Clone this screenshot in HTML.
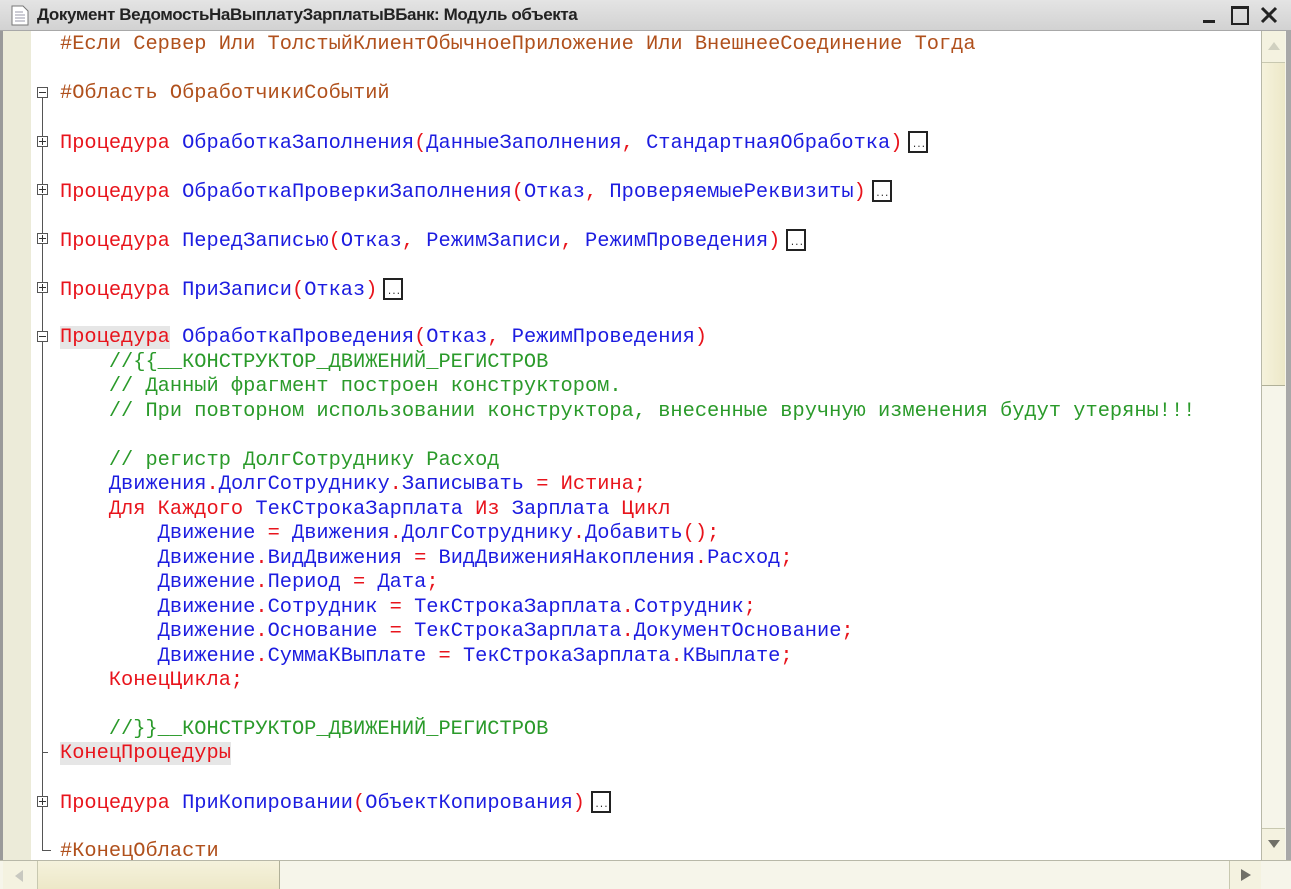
<!DOCTYPE html>
<html><head><meta charset="utf-8"><style>
body{margin:0;width:1291px;height:888px;overflow:hidden;background:#fff;position:relative;font-family:"Liberation Sans",sans-serif}
#title{position:absolute;left:0;top:0;width:1291px;height:30px;background:linear-gradient(#e4e4e4,#d2d2d2);border-bottom:1px solid #a8a8a8}
#title .t{position:absolute;left:37px;top:5px;font-size:17px;font-weight:bold;color:#222;letter-spacing:-0.4px}
#gut{position:absolute;left:0;top:31px;width:31px;height:829px;background:#ecebd9;border-left:3px solid #9a9a9a;box-sizing:border-box}
#code{position:absolute;left:60px;top:33px;font-family:"Liberation Mono",monospace;font-size:20.35px;white-space:pre}
.l{position:absolute;left:0;height:24px;line-height:24px}
.r{color:#e8141c}.b{color:#1c1ce0}.g{color:#2a9a2a}.p{color:#b0501c}
.hl{background:#e6e6e6}
.dots{display:inline-block;width:20px;height:22px;border:2px solid #222;vertical-align:-5px;font-size:9px;line-height:24px;text-align:center;color:#222;box-sizing:border-box;margin-left:6px;overflow:hidden;letter-spacing:-1px}
.box{position:absolute;left:37px;width:11px;height:11px;border:1px solid #555;background:#fff;box-sizing:border-box}
.box:before{content:"";position:absolute;left:1px;top:4px;width:7px;height:1px;background:#333}
.box.pl:after{content:"";position:absolute;left:4px;top:1px;width:1px;height:7px;background:#333}
#vs{position:absolute;left:1261px;top:31px;width:24px;height:829px;background:#f6f5ea;border-left:1px solid #b8b8a8}
#hs{position:absolute;left:0;top:860px;width:1291px;height:28px;background:#f6f5ea;border-top:1px solid #b8b8a8}
</style></head><body>
<div id="title">
<svg style="position:absolute;left:11px;top:5px" width="18" height="21"><path d="M1 1h11l5 5v14H1z" fill="#fff" stroke="#777"/><path d="M4 7h8M4 10h10M4 13h10M4 16h10" stroke="#99a"/></svg>
<div class="t">Документ ВедомостьНаВыплатуЗарплатыВБанк: Модуль объекта</div>
<div style="position:absolute;left:1203px;top:20px;width:12px;height:3px;background:#222"></div>
<div style="position:absolute;left:1231px;top:6px;width:14px;height:14px;border:2px solid #222;border-top-width:3px"></div>
<svg style="position:absolute;left:1260px;top:6px" width="18" height="18"><path d="M2 2L16 16M16 2L2 16" stroke="#222" stroke-width="3"/></svg>
</div>
<div style="position:absolute;left:1285px;top:30px;width:6px;height:858px;background:#a8a8a8"></div>
<div id="gut"></div>
<div style="position:absolute;left:42px;top:98px;width:1px;height:752px;background:#555"></div>
<div style="position:absolute;left:42px;top:850px;width:9px;height:1px;background:#555"></div>
<div style="position:absolute;left:42px;top:752px;width:6px;height:1px;background:#555"></div>
<div class="box" style="top:87px"></div>
<div class="box pl" style="top:136px"></div>
<div class="box pl" style="top:184px"></div>
<div class="box pl" style="top:233px"></div>
<div class="box pl" style="top:282px"></div>
<div class="box" style="top:331px"></div>
<div class="box pl" style="top:796px"></div>
<div id="code">
<div class="l p" style="top:0px">#Если Сервер Или ТолстыйКлиентОбычноеПриложение Или ВнешнееСоединение Тогда</div>
<div class="l p" style="top:49px">#Область ОбработчикиСобытий</div>
<div class="l" style="top:98px"><span class="r">Процедура</span> <span class="b">ОбработкаЗаполнения</span><span class="r">(</span><span class="b">ДанныеЗаполнения</span><span class="r">,</span> <span class="b">СтандартнаяОбработка</span><span class="r">)</span><span class="dots">...</span></div>
<div class="l" style="top:147px"><span class="r">Процедура</span> <span class="b">ОбработкаПроверкиЗаполнения</span><span class="r">(</span><span class="b">Отказ</span><span class="r">,</span> <span class="b">ПроверяемыеРеквизиты</span><span class="r">)</span><span class="dots">...</span></div>
<div class="l" style="top:196px"><span class="r">Процедура</span> <span class="b">ПередЗаписью</span><span class="r">(</span><span class="b">Отказ</span><span class="r">,</span> <span class="b">РежимЗаписи</span><span class="r">,</span> <span class="b">РежимПроведения</span><span class="r">)</span><span class="dots">...</span></div>
<div class="l" style="top:245px"><span class="r">Процедура</span> <span class="b">ПриЗаписи</span><span class="r">(</span><span class="b">Отказ</span><span class="r">)</span><span class="dots">...</span></div>
<div class="l" style="top:293px"><span class="r hl">Процедура</span> <span class="b">ОбработкаПроведения</span><span class="r">(</span><span class="b">Отказ</span><span class="r">,</span> <span class="b">РежимПроведения</span><span class="r">)</span></div>
<div class="l g" style="top:318px">    //{{__КОНСТРУКТОР_ДВИЖЕНИЙ_РЕГИСТРОВ</div>
<div class="l g" style="top:342px">    // Данный фрагмент построен конструктором.</div>
<div class="l g" style="top:367px">    // При повторном использовании конструктора, внесенные вручную изменения будут утеряны!!!</div>
<div class="l g" style="top:416px">    // регистр ДолгСотруднику Расход</div>
<div class="l" style="top:440px">    <span class="b">Движения</span><span class="r">.</span><span class="b">ДолгСотруднику</span><span class="r">.</span><span class="b">Записывать</span> <span class="r">=</span> <span class="r">Истина;</span></div>
<div class="l" style="top:465px">    <span class="r">Для Каждого</span> <span class="b">ТекСтрокаЗарплата</span> <span class="r">Из</span> <span class="b">Зарплата</span> <span class="r">Цикл</span></div>
<div class="l" style="top:489px">        <span class="b">Движение</span> <span class="r">=</span> <span class="b">Движения</span><span class="r">.</span><span class="b">ДолгСотруднику</span><span class="r">.</span><span class="b">Добавить</span><span class="r">();</span></div>
<div class="l" style="top:514px">        <span class="b">Движение</span><span class="r">.</span><span class="b">ВидДвижения</span> <span class="r">=</span> <span class="b">ВидДвиженияНакопления</span><span class="r">.</span><span class="b">Расход</span><span class="r">;</span></div>
<div class="l" style="top:538px">        <span class="b">Движение</span><span class="r">.</span><span class="b">Период</span> <span class="r">=</span> <span class="b">Дата</span><span class="r">;</span></div>
<div class="l" style="top:563px">        <span class="b">Движение</span><span class="r">.</span><span class="b">Сотрудник</span> <span class="r">=</span> <span class="b">ТекСтрокаЗарплата</span><span class="r">.</span><span class="b">Сотрудник</span><span class="r">;</span></div>
<div class="l" style="top:587px">        <span class="b">Движение</span><span class="r">.</span><span class="b">Основание</span> <span class="r">=</span> <span class="b">ТекСтрокаЗарплата</span><span class="r">.</span><span class="b">ДокументОснование</span><span class="r">;</span></div>
<div class="l" style="top:612px">        <span class="b">Движение</span><span class="r">.</span><span class="b">СуммаКВыплате</span> <span class="r">=</span> <span class="b">ТекСтрокаЗарплата</span><span class="r">.</span><span class="b">КВыплате</span><span class="r">;</span></div>
<div class="l r" style="top:636px">    КонецЦикла;</div>
<div class="l g" style="top:685px">    //}}__КОНСТРУКТОР_ДВИЖЕНИЙ_РЕГИСТРОВ</div>
<div class="l" style="top:709px"><span class="r hl">КонецПроцедуры</span></div>
<div class="l" style="top:758px"><span class="r">Процедура</span> <span class="b">ПриКопировании</span><span class="r">(</span><span class="b">ОбъектКопирования</span><span class="r">)</span><span class="dots">...</span></div>
<div class="l p" style="top:807px">#КонецОбласти</div>
</div>
<div id="vs">
<div style="position:absolute;left:0;top:0;width:23px;height:31px;border-bottom:1px solid #c8c8b0;background:#f4f2e0"></div>
<svg style="position:absolute;left:5px;top:10px" width="14" height="10"><path d="M7 1L13 9H1z" fill="#d0d0c0"/></svg>
<div style="position:absolute;left:0;top:32px;width:23px;height:322px;background:linear-gradient(90deg,#f5f2dc,#ede8c8);border-bottom:1px solid #b0b098"></div>
<div style="position:absolute;left:0;top:797px;width:23px;height:32px;border-top:1px solid #c8c8b0;background:#f4f2e0"></div>
<svg style="position:absolute;left:5px;top:808px" width="14" height="10"><path d="M1 1H13L7 9z" fill="#707068"/></svg>
</div>
<div id="hs">
<div style="position:absolute;left:3px;top:0;width:34px;height:28px;background:#f4f2e0;border-right:1px solid #c8c8b0"></div>
<svg style="position:absolute;left:14px;top:8px" width="10" height="14"><path d="M9 1V13L1 7z" fill="#c8c8c0"/></svg>
<div style="position:absolute;left:38px;top:0;width:241px;height:28px;background:linear-gradient(#f5f2dc,#ede8c8);border-right:1px solid #b0b098"></div>
<div style="position:absolute;left:1229px;top:0;width:31px;height:28px;background:#f4f2e0;border-left:1px solid #c8c8b0"></div>
<svg style="position:absolute;left:1240px;top:7px" width="12" height="14"><path d="M1 1V13L11 7z" fill="#707068"/></svg>
</div>
</body></html>
